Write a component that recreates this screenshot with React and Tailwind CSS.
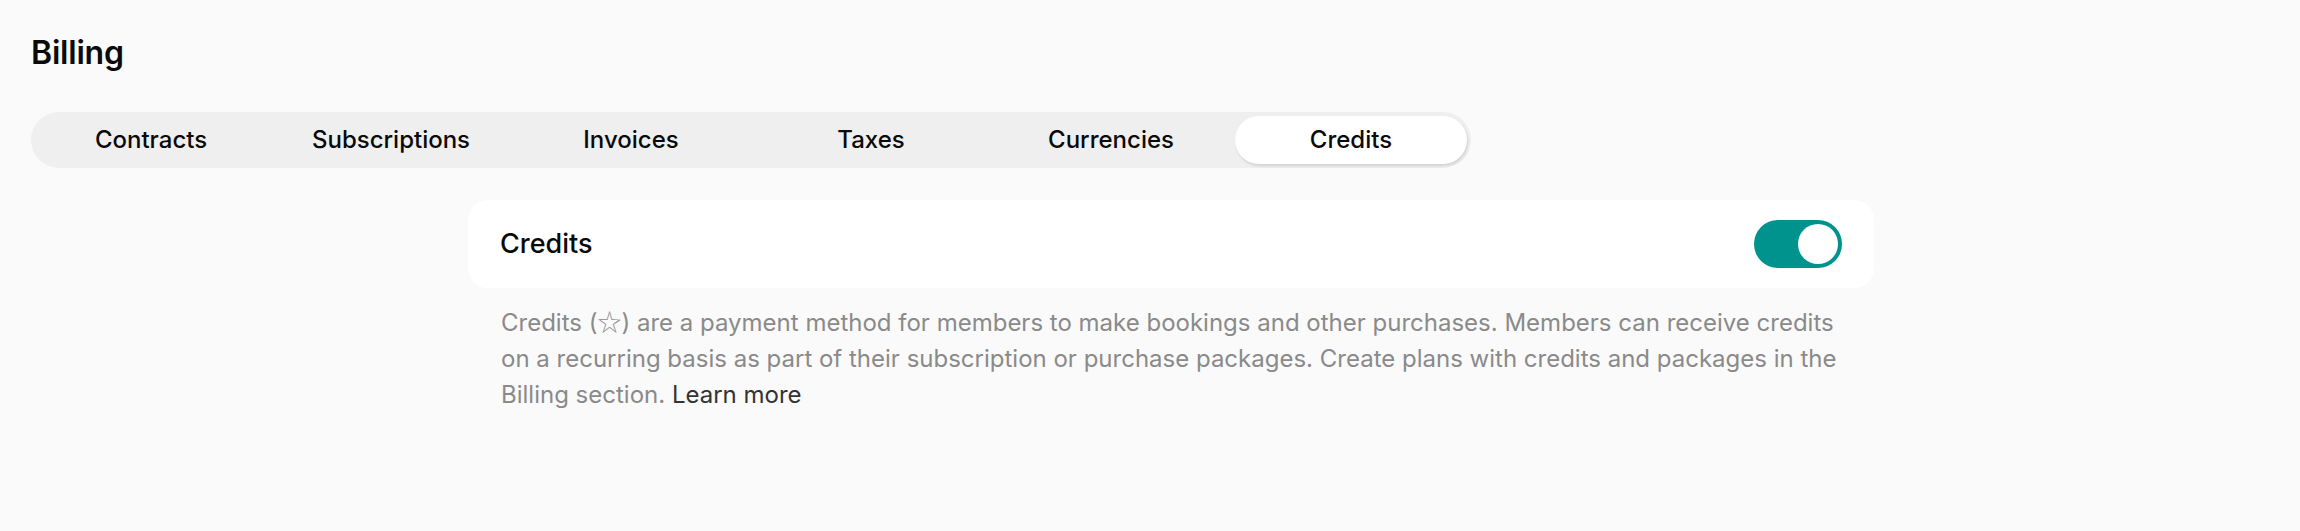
export default function App() {
  const tabs = ["Contracts", "Subscriptions", "Invoices", "Taxes", "Currencies", "Credits"];
  const active = "Credits";
  return (
    <div className="min-h-[531px] w-full bg-[#fafafa] text-[#0a0a0a]" style={{ fontFamily: "Inter, 'Noto Sans', sans-serif" }}>
      <div className="pl-[31px] pt-[33px]">
        <h1 className="text-[32px] font-semibold leading-[40px] tracking-[-0.2px]">Billing</h1>
        <div className="mt-[39px] grid h-[56px] w-[1440px] grid-cols-6 rounded-full bg-[#efefef]">
          {tabs.map((t) => (
            <div key={t} className="flex p-1">
              <div
                className={
                  t === active
                    ? "flex flex-1 items-center justify-center rounded-full bg-white text-[24px] font-medium shadow-[1px_2px_3px_rgba(0,0,0,0.12)]"
                    : "flex flex-1 items-center justify-center rounded-full text-[24px] font-medium"
                }
              >
                {t}
              </div>
            </div>
          ))}
        </div>
        <div className="ml-[437px] mt-[32px] w-[1406px]">
          <div className="flex h-[88px] items-center justify-between rounded-[20px] bg-white px-[32px]">
            <span className="text-[27px] font-medium leading-[36px]">Credits</span>
            <div className="flex h-[48px] w-[88px] items-center justify-end rounded-full bg-[#00938d] p-1">
              <div className="h-[40px] w-[40px] rounded-full bg-white" />
            </div>
          </div>
          <p className="mt-[15px] px-[33px] text-[24px] leading-[36px] text-[#8a8a8a]">
            Credits (
            <span style={{ fontFamily: "'Noto Sans CJK JP', sans-serif" }} className="font-light">☆</span>
            ) are a payment method for members to make bookings and other purchases. Members can receive credits on a recurring basis as part of their subscription or purchase packages. Create plans with credits and packages in the Billing section.{" "}
            <span className="text-[#333333]">Learn more</span>
          </p>
        </div>
      </div>
    </div>
  );
}
